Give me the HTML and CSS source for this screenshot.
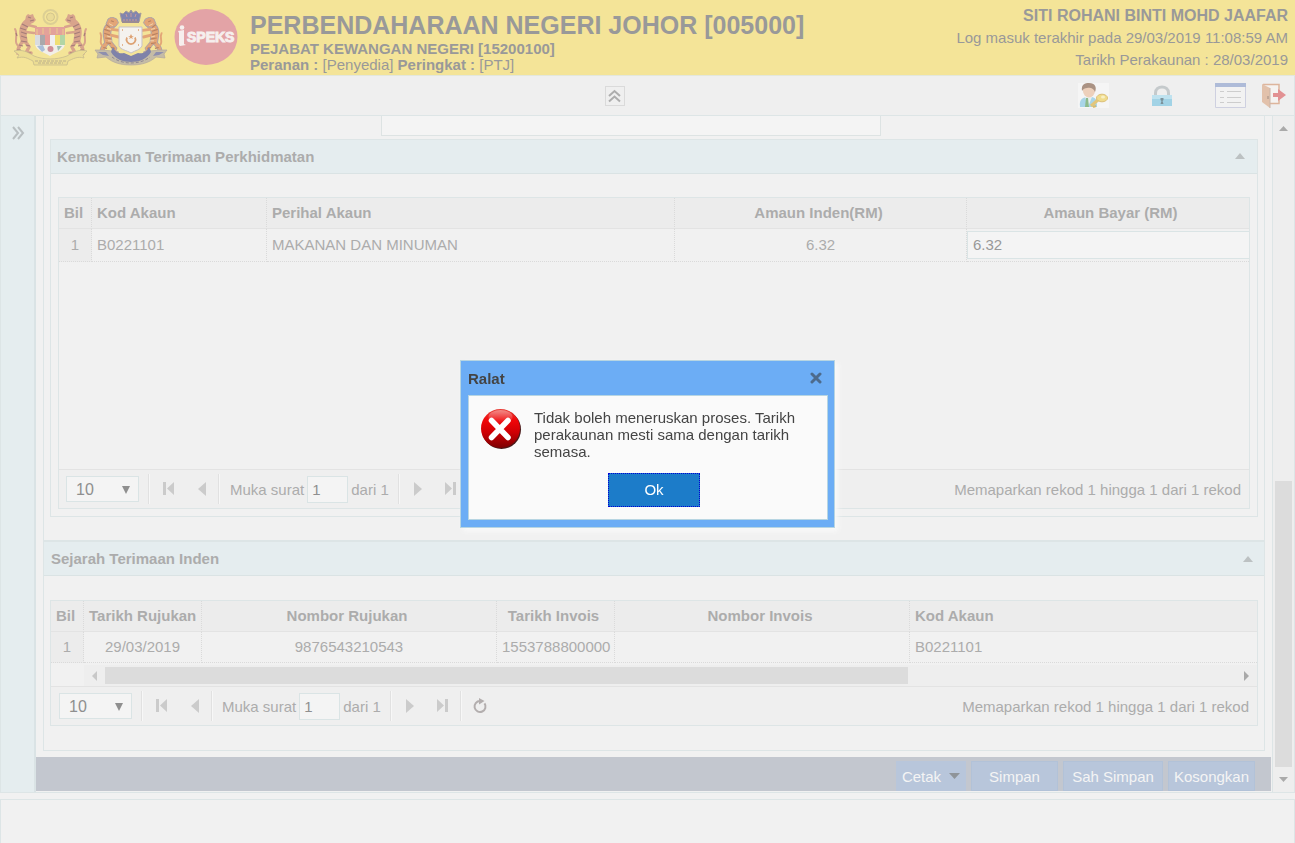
FILE: index.html
```html
<!DOCTYPE html>
<html lang="ms">
<head>
<meta charset="utf-8">
<title>iSPEKS</title>
<link rel="stylesheet" href="styles.css">
</head>
<body>
<svg class="defs" width="0" height="0" aria-hidden="true">
  <symbol id="tiger" viewBox="0 0 24 42">
    <g fill="none" stroke="#d8a48c" stroke-linecap="round">
      <path d="M15 8C9 12 9 19 11 26" stroke-width="7"/>
      <path d="M10 26C8 32 4 32 5 39h4M12 27l4 6-3 6h5" stroke-width="3.500"/>
      <path d="M15 11l8 2M13 18l8 1" stroke-width="2.500"/>
      <path d="M7 33C-1 29 6 22 2 15" stroke-width="2"/>
    </g>
    <path d="M13 2l2-2 2 1 3-1 1 3 2 3-3 3-4 1-4-3z" fill="#d8a48c"/>
    <path d="M7 14l6 2M8 18l6 2M8 22l6 2M8 27l6 1M6 31l4 1M13 31l4 1M4 36l4 0M9 10l6 3M15 3l3 1M17 7l4-1M5 39h4M14 39h4M3 19l1 3" fill="none" stroke="#a57d79" stroke-width="1.200"/>
  </symbol>
  <symbol id="lion" viewBox="0 0 22 42">
    <g fill="none" stroke="#a9a2ac" stroke-linecap="round">
      <path d="M13 9C7 13 9 19 10 25" stroke-width="9"/>
      <path d="M9 26C7 31 2 32 4 38h4M12 27l5 6-2 5h4" stroke-width="5"/>
    </g>
    <g fill="none" stroke="#e3a577" stroke-linecap="round">
      <path d="M13 9C7 13 9 19 10 25" stroke-width="7"/>
      <path d="M9 26C7 31 2 32 4 38h4M12 27l5 6-2 5h4" stroke-width="3.500"/>
      <path d="M14 13l8 1M13 19l8 2" stroke-width="3"/>
      <path d="M5 31C-1 27 5 22 2 17" stroke-width="2"/>
    </g>
    <path d="M10 2l4-2 5 2 2 4-3 4-6 1-4-4z" fill="#e3a577" stroke="#a9a2ac"/>
    <path d="M8 8l4 3M6 13l6 2M6 17l6 2M7 22l6 1M8 27l5 1M5 32l4 1M13 32l4 1M13 4l3 1" fill="none" stroke="#b98262" stroke-width="1.200"/>
    <path d="M11 7l4 2M9 12l4 1M9 20l4 1M10 25l4 0" stroke="#f3d6ae"/>
  </symbol>
  <symbol id="i-prev" viewBox="0 0 12 14"><path d="M10 0v14L2 7z"/></symbol>
  <symbol id="i-next" viewBox="0 0 12 14"><path d="M2 0v14L10 7z"/></symbol>
  <symbol id="i-first" viewBox="0 0 12 14"><path d="M0 0h3v13h-3zM11 0v13L4 6.500z"/></symbol>
  <symbol id="i-last" viewBox="0 0 12 14"><path d="M8 0h3v13h-3zM0 0v13L7 6.500z"/></symbol>
  <symbol id="i-refresh" viewBox="0 0 16 16"><path d="M8 3A5.500 5.500 0 1 0 12.500 5.300" fill="none" stroke="#b3aeae" stroke-width="2"/><path d="M7 0l5.500 3L7 6.500z" fill="#b3aeae"/></symbol>
</svg>

<header class="banner">
  <div class="logos">
    <svg width="75" height="57" viewBox="0 0 75 57" role="img" aria-label="Jata Negara">
      <circle cx="37.500" cy="8" r="7" fill="none" stroke="#dccf94" stroke-width="2"/>
      <circle cx="37.500" cy="8" r="4" fill="#eadb97" stroke="#d3c58e"/>
      <use href="#tiger" x="0" y="5" width="24" height="42"/>
      <use href="#tiger" x="0" y="5" width="24" height="42" transform="translate(75 0) scale(-1 1)"/>
      <path d="M22 18h30v16c0 7-8 9-15 13-7-4-15-6-15-13z" fill="#f2efe8"/>
      <path d="M22 18h30v8H22z" fill="#e3a29a"/>
      <path d="M24 20v6M30 19v6M37 19v6M44 19v6M50 20v6" stroke="#eccb8f" stroke-width="1"/>
      <path d="M27 26h5v10h-5z" fill="#aaa8ab"/><path d="M32 26h5v10h-5z" fill="#e59b98"/>
      <path d="M37 26h5v10h-5z" fill="#f0eff0"/><path d="M42 26h5v10h-5z" fill="#f0df75"/>
      <path d="M22 26h5v10h-5z" fill="#d9dce0"/><path d="M47 26h5v10h-5z" fill="#b2d5a5"/>
      <path d="M24 37l6-1 2 5-3 2z" fill="#a9bdd8"/>
      <circle cx="37.500" cy="40" r="3" fill="#cf8f98"/><path d="M44 37l5 0-4 5z" fill="#9dc0b4"/>
      <path d="M1 42c8-2 14 1 20 5 10 4 22 4 33 0 6-4 12-7 20-5l-4 4 1 3c-7-2-11 1-16 3l-1 4H21l-1-4c-6-3-9-5-16-3l2-3z" fill="#ecdd93" stroke="#c8bb8e" stroke-width=".8"/>
      <path d="M22 52h31M25 54h25" stroke="#bcb08c" stroke-dasharray="3 1"/>
    </svg>
    <svg width="74" height="57" viewBox="0 0 74 57" role="img" aria-label="Jata Johor">
      <path d="M26 4l3 1 3-3 3 2 2-3 2 3 3-2 3 3 2-1-2 9H28z" fill="#8285ae" stroke="#a39a9c"/>
      <path d="M28 13h17" stroke="#9a8b94" stroke-width="2"/><path d="M29 11h15" stroke="#d19a8a" stroke-dasharray="2 1"/>
      <path d="M32 5l1 3M37 4v4M42 5l-1 3" stroke="#c99a9c"/>
      <use href="#lion" x="4" y="8" width="22" height="40" preserveAspectRatio="none"/>
      <use href="#lion" x="4" y="8" width="22" height="40" transform="translate(74 0) scale(-1 1)"/>
      <path d="M1 41l8 0 9 1c6 9 12 11 19 11s13-2 19-11l9-1 8 0-3 4 1 4-9-1c-7 6-15 8-25 8S19 54 12 48l-9 1 1-4z" fill="#c5bca6" stroke="#b2a89d" stroke-width=".7"/>
      <path d="M19 38c3 6 7 7 11 6l7 3 7-3c4 1 8 0 11-6l2 5c-4 7-12 10-20 10S21 50 17 43z" fill="#7f82a9"/>
      <path d="M4 43l8 0 3 4-6-1M70 43l-8 0-3 4 6-1" fill="#8e8fae"/>
      <path d="M25 18h23v19c-2 4-6 4-11 7-5-3-10-3-12-7z" fill="#f4f2ee" stroke="#c6c1c8"/>
      <path d="M33 28.500a4.500 4.500 0 1 0 8 0" fill="none" stroke="#dda273" stroke-width="1.800"/>
      <path d="M37 25l1 2h2l-2 1 1 2-2-1-2 1 1-2-2-1h2z" fill="#dda273"/>
      <path d="M28 21h1M44 21h1M28 36h1M44 36h1" stroke="#dda273" stroke-width="1.500"/>
      <path d="M18 48c10 8 28 8 38 0" fill="none" stroke="#8f8794" stroke-dasharray="3 2"/>
    </svg>
    <svg width="64" height="57" viewBox="0 0 64 57" role="img" aria-label="iSPEKS">
      <ellipse cx="32" cy="28" rx="31.500" ry="28" fill="#e3a3a6"/>
      <circle cx="8" cy="18.500" r="2.300" fill="#f6efee"/>
      <path d="M4 22l6-1v14l2 1-6 1-1-1V24z" fill="#f6efee"/>
      <text x="13" y="33" class="logo-word">SPEKS</text>
    </svg>
  </div>
  <div class="agency">
    <h1>PERBENDAHARAAN NEGERI JOHOR [005000]</h1>
    <p><b>PEJABAT KEWANGAN NEGERI [15200100]</b></p>
    <p><b>Peranan :</b> [Penyedia] <b>Peringkat :</b> [PTJ]</p>
  </div>
  <div class="user">
    <strong>SITI ROHANI BINTI MOHD JAAFAR</strong>
    <span>Log masuk terakhir pada 29/03/2019 11:08:59 AM</span>
    <span>Tarikh Perakaunan : 28/03/2019</span>
  </div>
</header>

<nav class="toolbar">
  <span></span>
  <button class="collapse" aria-label="Tutup pengepala">
    <svg width="13" height="14" viewBox="0 0 13 14"><path d="M1 7l5.500-5L12 7M1 12.500l5.500-5 5.500 5" fill="none" stroke="#adadad" stroke-width="2"/></svg>
  </button>
  <div class="tools">
    <a href="#" aria-label="Tukar kata laluan" class="tool-key">
      <svg width="31" height="25" viewBox="0 0 31 25"><path fill="#f5f5f5" d="M0 0h31v25H0z"/>
        <path d="M2 24c-1-7 2-9 6-10h6c4 1 5 3 5 10z" fill="#a9d5e8"/><path d="M7 14l3 10 4-10z" fill="#e9f0ee"/><path d="M8 15h2l1 9H7z" fill="#8dbb8c"/>
        <ellipse cx="11" cy="8" rx="6" ry="6.500" fill="#edd0bb"/><path d="M4 8C3 1 7 0 11 0c6 0 8 4 6 9-1-3-4-5-8-4-2 0-4 1-5 3z" fill="#aa9283"/>
        <path d="M13 23l8-7" stroke="#e3c67a" stroke-width="3"/><path d="M15 24l3-1" stroke="#d8bb6e" stroke-width="2"/><ellipse cx="24" cy="15" rx="5.500" ry="3.800" fill="#f0dc8d" stroke="#dcc078"/><ellipse cx="25" cy="14" rx="2" ry="1.500" fill="#f8f0c4"/></svg>
    </a>
    <a href="#" aria-label="Kunci" class="tool-lock">
      <svg width="22" height="22" viewBox="0 0 22 22"><path d="M4.500 12V8c0-8 13-8 13 0v4" fill="none" stroke="#c5cacc" stroke-width="3"/><path d="M1 10h20v11H1z" fill="#a2d3e6"/><path d="M1 10h20v4H1z" fill="#bfe2ef"/><path d="M9.500 13h3v2l-1 1 1 3h-3l1-3-1-1z" fill="#7c929b"/></svg>
    </a>
    <a href="#" aria-label="Senarai" class="tool-list">
      <svg width="31" height="25" viewBox="0 0 31 25"><path d="M.5.5h30v24H.5z" fill="#f2f2f2" stroke="#ced0e0"/><path d="M0 0h31v4H0z" fill="#aebbd8"/><path d="M5 8.500h4M12 8.500h14M5 14.500h4M12 14.500h14M5 19.500h4M12 19.500h14" stroke="#cdcdcd"/></svg>
    </a>
    <a href="#" aria-label="Log keluar">
      <svg width="24" height="26" viewBox="0 0 24 26"><path d="M1 1.500h16v19H8" fill="#f5f3f1" stroke="#ddb59c" stroke-width="1.500"/><path d="M0 1l8 4v20l-8-6z" fill="#e2c1ab"/><path d="M6 13v3" stroke="#9f8d83"/><path d="M8 5v20" stroke="#c9b5a9"/><path d="M11 10h5V6l8 6-8 6v-4h-5z" fill="#e29193"/></svg>
    </a>
  </div>
</nav>

<main class="workspace">
  <aside class="rail">
    <button aria-label="Buka menu"><svg width="14" height="14" viewBox="0 0 14 14"><path d="M2 1l5 6-5 6M7 1l5 6-5 6" fill="none" stroke="#b9bfc1" stroke-width="2"/></svg></button>
  </aside>

  <div class="content">
    <section class="outer">
      <div class="field-row"><textarea aria-label="Catatan"></textarea></div>
      <section class="panel">
        <h2 class="panel-head">Kemasukan Terimaan Perkhidmatan <svg width="10" height="6" viewBox="0 0 10 6"><path d="M0 6l5-6 5 6z"/></svg></h2>
        <div class="panel-body">
          <div class="grid">
            <div class="grid-rows tall">
              <table>
                <colgroup><col class="c-bil"><col class="c-kod"><col class="c-perihal"><col class="c-amaun"><col></colgroup>
                <thead><tr><th>Bil</th><th class="left">Kod Akaun</th><th class="left">Perihal Akaun</th><th>Amaun Inden(RM)</th><th>Amaun Bayar (RM)</th></tr></thead>
                <tbody><tr class="edit-row"><td class="bil">1</td><td class="left">B0221101</td><td class="left">MAKANAN DAN MINUMAN</td><td>6.32</td><td class="edit"><input type="text" value="6.32" aria-label="Amaun Bayar (RM)"></td></tr></tbody>
              </table>
            </div>
            <div class="pager">
              <span class="size"><select aria-label="Rekod setiap muka"><option>10</option></select><svg width="8" height="8" viewBox="0 0 8 8"><path d="M0 0h8L4 8z"/></svg></span>
              <i class="sep"></i>
              <button aria-label="Muka pertama"><svg width="12" height="14"><use href="#i-first"/></svg></button>
              <button aria-label="Muka sebelum"><svg width="12" height="14"><use href="#i-prev"/></svg></button>
              <i class="sep"></i>
              <label class="page">Muka surat <input type="text" value="1"> dari 1</label>
              <i class="sep"></i>
              <button aria-label="Muka seterusnya"><svg width="12" height="14"><use href="#i-next"/></svg></button>
              <button aria-label="Muka terakhir"><svg width="12" height="14"><use href="#i-last"/></svg></button>
              <i class="sep"></i>
              <button aria-label="Muat semula"><svg width="16" height="16"><use href="#i-refresh"/></svg></button>
              <span class="summary">Memaparkan rekod 1 hingga 1 dari 1 rekod</span>
            </div>
          </div>
        </div>
      </section>
    </section>

    <section class="history">
      <h2 class="panel-head">Sejarah Terimaan Inden <svg width="10" height="6" viewBox="0 0 10 6"><path d="M0 6l5-6 5 6z"/></svg></h2>
      <div class="history-body">
        <div class="grid">
          <div class="grid-rows">
            <table>
              <colgroup><col class="c-bil"><col class="c-date"><col class="c-no"><col class="c-date"><col class="c-no"><col></colgroup>
              <thead><tr><th>Bil</th><th>Tarikh Rujukan</th><th>Nombor Rujukan</th><th>Tarikh Invois</th><th>Nombor Invois</th><th class="left">Kod Akaun</th></tr></thead>
              <tbody><tr><td class="bil">1</td><td>29/03/2019</td><td>9876543210543</td><td>1553788800000</td><td></td><td class="left">B0221101</td></tr></tbody>
            </table>
            <div class="hscroll">
              <svg width="5" height="10" viewBox="0 0 5 10"><path d="M5 0v10L0 5z" fill="#c8c8c8"/></svg>
              <div class="htrack"><div class="hthumb"></div></div>
              <svg width="5" height="10" viewBox="0 0 5 10"><path d="M0 0v10l5-5z" fill="#a9a9a9"/></svg>
            </div>
          </div>
          <div class="pager">
            <span class="size"><select aria-label="Rekod setiap muka"><option>10</option></select><svg width="8" height="8" viewBox="0 0 8 8"><path d="M0 0h8L4 8z"/></svg></span>
            <i class="sep"></i>
            <button aria-label="Muka pertama"><svg width="12" height="14"><use href="#i-first"/></svg></button>
            <button aria-label="Muka sebelum"><svg width="12" height="14"><use href="#i-prev"/></svg></button>
            <i class="sep"></i>
            <label class="page">Muka surat <input type="text" value="1"> dari 1</label>
            <i class="sep"></i>
            <button aria-label="Muka seterusnya"><svg width="12" height="14"><use href="#i-next"/></svg></button>
            <button aria-label="Muka terakhir"><svg width="12" height="14"><use href="#i-last"/></svg></button>
            <i class="sep"></i>
            <button aria-label="Muat semula"><svg width="16" height="16"><use href="#i-refresh"/></svg></button>
            <span class="summary">Memaparkan rekod 1 hingga 1 dari 1 rekod</span>
          </div>
        </div>
      </div>
    </section>

    <div class="actions">
      <button class="menu">Cetak <svg width="11" height="6" viewBox="0 0 11 6"><path d="M0 0h11L5.500 6z" fill="#8f9499"/></svg></button>
      <button class="wide">Simpan</button>
      <button class="wider">Sah Simpan</button>
      <button class="wide">Kosongkan</button>
    </div>
  </div>

  <div class="vscroll">
    <div class="arrow"><svg width="9" height="5" viewBox="0 0 9 5"><path d="M0 5l4.500-5L9 5z"/></svg></div>
    <div class="vspace"></div>
    <div class="vthumb"></div>
    <div class="arrow"><svg width="9" height="5" viewBox="0 0 9 5"><path d="M0 0h9L4.500 5z"/></svg></div>
  </div>
</main>

<footer class="bottom"></footer>

<div class="overlay">
  <div class="dialog" role="alertdialog" aria-labelledby="dlg-title" aria-describedby="dlg-text">
    <div class="dialog-head"><h2 id="dlg-title">Ralat</h2>
      <button class="close" aria-label="Tutup"><svg width="12" height="12" viewBox="0 0 12 12"><path d="M2 2l8 8M10 2l-8 8" stroke="#4d6b8c" stroke-width="3" stroke-linecap="round"/></svg></button>
    </div>
    <div class="dialog-body">
      <div class="message">
        <svg width="41" height="41" viewBox="0 0 41 41" aria-hidden="true">
          <defs><linearGradient id="ball" x1="0" y1="0" x2="0" y2="1"><stop offset="0" stop-color="#e8413a"/><stop offset=".3" stop-color="#f00508"/><stop offset=".6" stop-color="#cf0004"/><stop offset="1" stop-color="#7c0002"/></linearGradient>
          <linearGradient id="shine" x1="0" y1="0" x2="0" y2="1"><stop offset="0" stop-color="#fff" stop-opacity=".4"/><stop offset="1" stop-color="#fff" stop-opacity="0"/></linearGradient></defs>
          <circle cx="20.500" cy="20.500" r="19.500" fill="#4a1a1a"/><circle cx="19.500" cy="19.500" r="19.500" fill="url(#ball)"/>
          <ellipse cx="19.500" cy="8" rx="12" ry="7" fill="url(#shine)"/>
          <path d="M10.500 11.500l16.500 17M27 11.500l-16.500 17" stroke="#fff" stroke-width="5.500" stroke-linecap="round"/>
        </svg>
        <p id="dlg-text">Tidak boleh meneruskan proses. Tarikh perakaunan mesti sama dengan tarikh semasa.</p>
      </div>
      <button class="ok">Ok</button>
    </div>
  </div>
</div>
</body>
</html>
```
FILE: styles.css
```css
* { box-sizing: border-box; }
body {
  margin: 0;
  min-height: 100vh;
  display: flex;
  flex-direction: column;
  background: #f1f1f1;
  color: #acacac;
  font: 15px/17px "Liberation Sans", Arial, sans-serif;
}
h1, h2, p { margin: 0; }
button, input, select, textarea { font: inherit; color: inherit; margin: 0; }
button { border: 0; padding: 0; background: none; }
svg { display: block; flex: none; }
.defs { position: absolute; }

/* Banner */
.banner {
  display: flex;
  height: 76px;
  background: #f4e498;
  border-bottom: 1px solid #e3e7dc;
  color: #999;
}
.logos { display: flex; gap: 6px; padding: 9px 0 0 13px; }
.logo-word { font: bold 14px "Liberation Sans", Arial, sans-serif; fill: #f6efee; stroke: #f6efee; }
.agency { padding: 9px 0 0 12px; line-height: 16px; white-space: nowrap; }
.agency h1 { font-size: 25px; line-height: 32px; }
.user {
  margin-left: auto;
  padding: 5px 7px 0 0;
  display: flex;
  flex-direction: column;
  align-items: flex-end;
  line-height: 22px;
  white-space: nowrap;
}
.user strong { font-size: 16px; }

/* Toolbar */
.toolbar {
  display: grid;
  grid-template-columns: 1fr auto 1fr;
  align-items: center;
  height: 40px;
  background: #efefef;
  border: 1px solid #dde5e6;
  border-top: 0;
}
.collapse { display: grid; place-items: center; width: 20px; height: 20px; border: 1px solid #dadada; margin-right: 66px; }
.tools { display: flex; align-items: center; justify-content: flex-end; padding-right: 8px; }
.tool-key { margin-right: 42px; }
.tool-lock { margin-right: 42px; }
.tool-list { margin-right: 16px; }

/* Workspace */
.workspace { display: flex; border: 1px solid #dde5e6; border-top: 0; }
.rail { width: 35px; background: #e5edef; border-right: 2px solid #dae3e5; padding: 10px 0 0 10px; }
.content { flex: 1; min-width: 0; padding-bottom: 1px; }
.outer {
  margin: 0 7px;
  padding: 0 6px 23px;
  border: solid #dde5e6;
  border-width: 0 1px;
}
.field-row { display: flex; padding: 0 0 3px 331px; }
.field-row textarea {
  width: 500px;
  height: 20px;
  resize: none;
  background: #f4f4f4;
  border: 1px solid #dde3e3;
  border-top: 0;
}
.panel { border: 1px solid #dde5e6; }
.panel-head {
  display: flex;
  align-items: center;
  justify-content: space-between;
  height: 34px;
  padding: 0 12px 1px 6px;
  background: #e5edef;
  border-bottom: 1px solid #dae3e4;
  font-size: 15px;
}
.panel-head svg { fill: #bcc1c2; }
.panel-body { padding: 23px 7px 7px; }
.history { margin: 0 7px 6px; border: 1px solid #dde5e6; border-top-width: 2px; }
.history .panel-head { padding: 0 11px 0 7px; }
.history-body { padding: 24px 6px; }

/* Grids */
.grid { border: 1px solid #dde5e6; }
.tall { min-height: 271px; }
.grid table { width: 100%; table-layout: fixed; border-collapse: separate; border-spacing: 0; }
.grid th, .grid td {
  height: 31px;
  padding: 0 5px 2px;
  text-align: center;
  white-space: nowrap;
  border-right: 1px dotted #dadada;
}
.grid th:last-child, .grid td:last-child { border-right: 0; }
.grid th { padding-right: 9px; background: #ececec; border-bottom: 1px solid #e3e3e3; }
.grid th:last-child { padding-right: 0; }
.grid td { border-bottom: 1px dotted #dadada; }
.grid .left { text-align: left; }
.grid .bil { background: #ececec; }
.grid .edit-row td { height: 33px; }
.grid td.edit { padding: 0; }
.edit input {
  display: block;
  width: 100%;
  height: 28px;
  padding: 0 5px 2px;
  background: #f4f4f4;
  border: 1px solid #dae4e5;
  border-right: 0;
  color: #999;
}
.c-bil { width: 33px; }
.c-kod { width: 175px; }
.c-perihal { width: 408px; }
.c-amaun { width: 292px; }
.c-date { width: 118px; }
.c-no { width: 295px; }

.hscroll {
  display: flex;
  align-items: center;
  height: 21px;
  margin: 2px 0 0 33px;
  padding: 0 8px;
  gap: 8px;
  background: #eee;
}
.htrack { flex: 1; }
.hthumb { width: 71%; height: 17px; background: #dcdcdc; }

/* Pager */
.pager {
  display: flex;
  align-items: center;
  height: 39px;
  padding: 0 8px 0 7px;
  border-top: 1px solid #e3e3e3;
  background: #efefef;
  white-space: nowrap;
}
.history .pager { padding-left: 8px; }
.size { position: relative; margin-right: 9px; color: #8f8f8f; }
.size select {
  display: block;
  appearance: none;
  width: 73px;
  height: 26px;
  padding: 0 9px;
  font-size: 16px;
  background: #f4f4f4;
  border: 1px solid #dae4e5;
  border-radius: 0;
}
.size svg { position: absolute; right: 9px; top: 10px; fill: #8f8f8f; pointer-events: none; }
.sep { width: 2px; height: 30px; margin-right: 2px; border-left: 1px solid #e1e1e1; border-right: 1px solid #f7f7f7; }
.pager button { display: grid; place-items: center; width: 33px; height: 30px; }
.pager button svg { fill: #cbcbcb; }
.page { display: flex; align-items: center; gap: 3px; margin: 0 9px 0 8px; }
.history .page { margin-left: 7px; }
.page input { width: 41px; height: 27px; padding: 0 4px; background: #f4f4f4; border: 1px solid #dae4e5; color: #8f8f8f; }
.summary { margin-left: auto; }

/* Action bar */
.actions {
  display: flex;
  justify-content: flex-end;
  gap: 5px;
  height: 34px;
  margin-right: 1px;
  padding: 4px 16px 0 0;
  background: #c3c7cf;
}
.actions button { background: #b8c6db; border: 1px solid #b2c2d8; color: #f4f4f4; text-align: center; white-space: nowrap; }
.actions .menu { display: flex; align-items: center; justify-content: center; gap: 8px; width: 70px; border-color: #b8c6db; }
.actions .wide { width: 87px; }
.actions .wider { width: 100px; }

/* Page scrollbar */
.vscroll { display: flex; flex-direction: column; width: 22px; padding: 0 2px 1px 2px; background: #eee; border-left: 1px solid #dde5e6; }
.vscroll .arrow { display: grid; place-items: center; height: 24px; fill: #aaa; }
.vspace { flex: 342; }
.vthumb { flex: 286; width: 17px; background: #dcdcdc; }

.bottom { flex: 1; min-height: 40px; margin-top: 6px; border: 1px solid #dde5e6; border-bottom: 0; }

/* Dialog */
.overlay { position: absolute; top: 0; left: 0; right: 0; display: flex; justify-content: center; padding-top: 360px; }
.dialog {
  width: 375px;
  padding: 0 6px 7px 7px;
  background: #6cadf5;
  border: 1px solid #b7d5e2;
  box-shadow: 3px 3px 5px #fafafa;
  color: #444;
}
.dialog-head { display: flex; align-items: center; justify-content: space-between; height: 34px; padding-right: 6px; }
.dialog-head h2 { font-size: 15px; }
.dialog-body { padding: 13px 12px 12px; background: #fafafa; border: 1px solid #b7d5e2; }
.message { display: flex; gap: 12px; }
.message p { flex: 1; padding-right: 12px; }
.ok {
  display: block;
  width: 92px;
  height: 34px;
  margin: 13px auto 0 127px;
  padding-bottom: 2px;
  background: #1c7cc9;
  border: 1px dotted #0000d8;
  color: #fff;
}
```
